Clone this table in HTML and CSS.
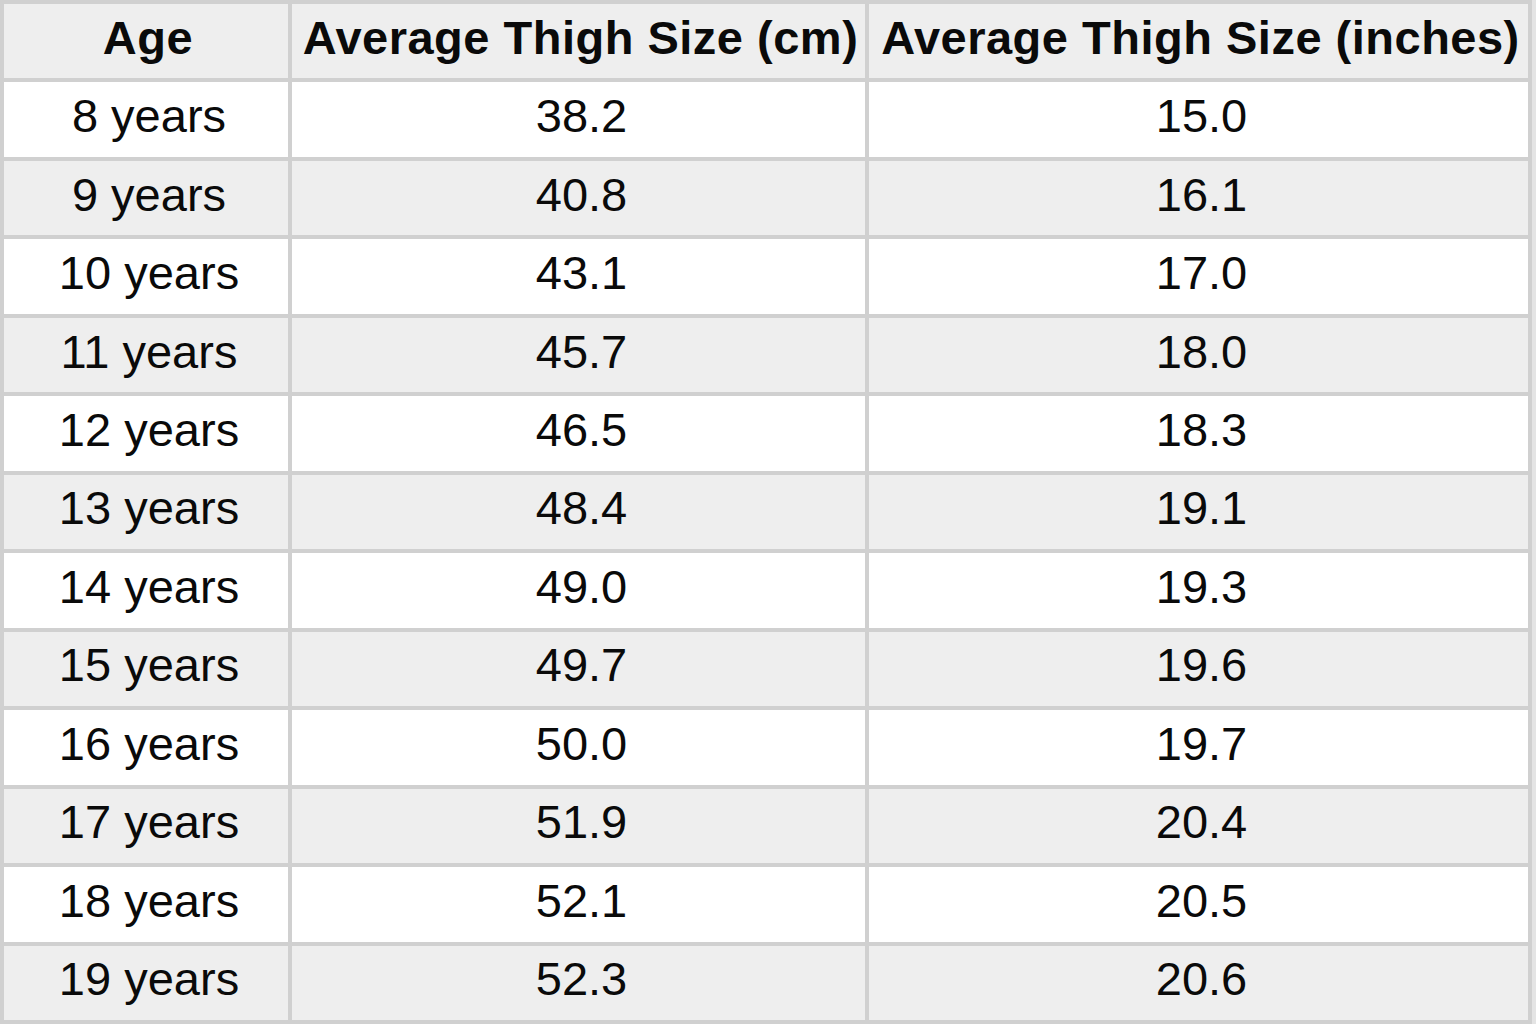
FILE: index.html
```html
<!DOCTYPE html>
<html lang="en">
<head>
<meta charset="utf-8">
<title>Average Thigh Size</title>
<link rel="stylesheet" href="styles.css">
</head>
<body>
<div class="page">
  <div class="table">
    <div class="cell head">Age</div>
    <div class="cell head">Average Thigh Size (cm)</div>
    <div class="cell head">Average Thigh Size (inches)</div>

    <div class="cell">8 years</div><div class="cell">38.2</div><div class="cell">15.0</div>
    <div class="cell alt">9 years</div><div class="cell alt">40.8</div><div class="cell alt">16.1</div>
    <div class="cell">10 years</div><div class="cell">43.1</div><div class="cell">17.0</div>
    <div class="cell alt">11 years</div><div class="cell alt">45.7</div><div class="cell alt">18.0</div>
    <div class="cell">12 years</div><div class="cell">46.5</div><div class="cell">18.3</div>
    <div class="cell alt">13 years</div><div class="cell alt">48.4</div><div class="cell alt">19.1</div>
    <div class="cell">14 years</div><div class="cell">49.0</div><div class="cell">19.3</div>
    <div class="cell alt">15 years</div><div class="cell alt">49.7</div><div class="cell alt">19.6</div>
    <div class="cell">16 years</div><div class="cell">50.0</div><div class="cell">19.7</div>
    <div class="cell alt">17 years</div><div class="cell alt">51.9</div><div class="cell alt">20.4</div>
    <div class="cell">18 years</div><div class="cell">52.1</div><div class="cell">20.5</div>
    <div class="cell alt">19 years</div><div class="cell alt">52.3</div><div class="cell alt">20.6</div>
  </div>
</div>
</body>
</html>
```

FILE: styles.css
```css
html, body {
  margin: 0;
  padding: 0;
  background: #e6e6e6;
}

.page {
  width: 1536px;
  height: 1024px;
  overflow: hidden;
  background: #e4e4e4;
}

.table {
  width: 1532px;
  height: 1024px;
  box-sizing: border-box;
  display: grid;
  grid-template-columns: 284px 573px 659px;
  grid-template-rows: repeat(13, 1fr);
  gap: 4px;
  padding: 4px;
  background: #d0d0d0;
  font-family: "Liberation Sans", Arial, Helvetica, sans-serif;
  color: #0a0a0a;
}

.cell {
  display: flex;
  align-items: center;
  justify-content: center;
  background: #ffffff;
  font-size: 47px;
  line-height: 1.15;
  padding: 0 0 7px 6px;
  white-space: nowrap;
}

.cell.alt {
  background: #eeeeee;
}

.cell.head {
  background: #eeeeee;
  font-weight: bold;
  font-size: 47px;
  letter-spacing: 0.5px;
  padding: 0 0 6px 4px;
}
```
